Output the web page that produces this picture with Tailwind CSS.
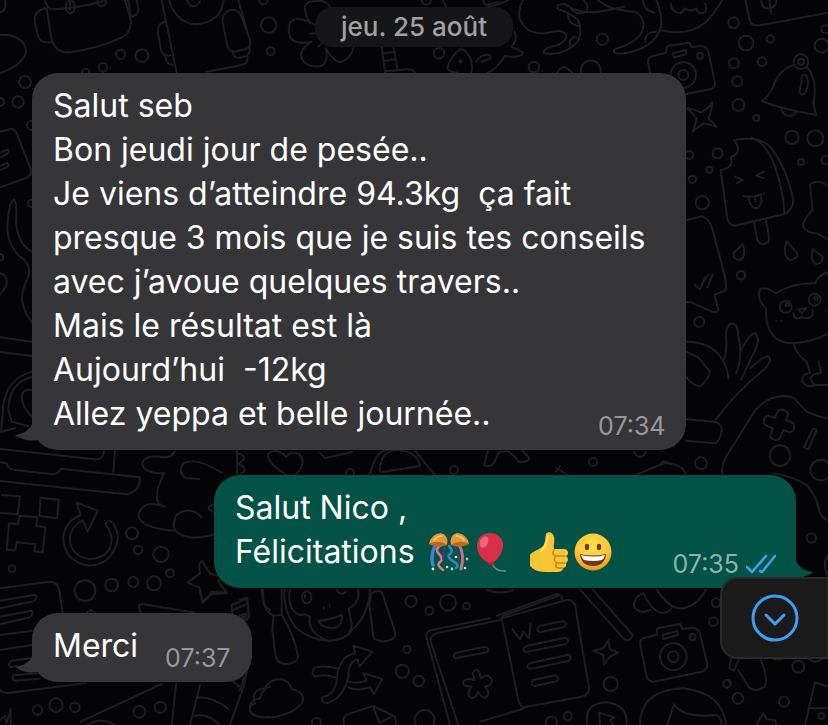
<!DOCTYPE html>
<html lang="fr">
<head>
  <meta charset="UTF-8" />
  <meta name="viewport" content="width=device-width, initial-scale=1" />
  <title>Conversation</title>
  <script src="https://cdn.jsdelivr.net/npm/@tailwindcss/browser@4"></script>
</head>
<body class="bg-[#040406] text-white font-['Inter',sans-serif] overflow-x-hidden">
  <div class="relative min-h-screen overflow-hidden">
    <!-- Wallpaper -->
    <svg aria-hidden="true" class="absolute top-0 left-0 w-[828px] h-[725px] text-[#1e1e20]" viewBox="0 0 828 725" fill="none" stroke="currentColor" stroke-width="6" stroke-linecap="round" stroke-linejoin="round">
      <!-- top left -->
      <g transform="scale(.33333)">
        <path d="M0 104Q70 102 78 150Q78 190 0 220M15 0Q22 30 0 38M135 0Q140 25 155 28Q240 25 320 0M140 25L155 120Q168 160 210 157Q300 145 370 110Q395 95 392 60L375 0M135 25Q100 35 104 62L114 110Q122 130 152 127M385 0L392 50Q420 45 414 20L410 0M210 5V30" />
        <ellipse cx="211" cy="20" rx="13" ry="20" /><circle cx="305" cy="5" r="13" />
        <circle cx="362" cy="163" r="14" /><circle cx="426" cy="167" r="19" /><circle cx="309" cy="202" r="13" /><circle cx="257" cy="217" r="11" /><circle cx="75" cy="246" r="18" /><circle cx="54" cy="306" r="17" /><circle cx="0" cy="306" r="12" />
        <path d="M485 0L530 218M507 0Q530 72 590 73Q665 65 671 0M560 0Q578 35 600 5M715 0L745 105M620 215L725 195Q745 190 742 170M495 65Q470 70 474 100L483 150Q490 170 512 166M495 168Q498 192 518 195M690 30Q666 40 668 65L682 140Q688 158 710 154L740 146Q755 140 750 120L724 50Q715 25 690 30M698 156Q700 175 718 173L738 168Q752 160 748 144" />
        <circle cx="806" cy="75" r="23" /><circle cx="812" cy="154" r="12" /><circle cx="790" cy="0" r="13" />
        <path d="M930 70Q900 15 930 5Q985 -5 990 25M945 75Q895 45 872 65Q860 85 872 115Q890 135 935 125Q895 150 905 175Q920 205 965 198Q985 190 978 145Q1000 185 1020 187Q1050 180 1062 140M930 100H945M955 140L965 130M1145 140L1155 218M1180 140L1192 205M1148 160L1185 156M1150 183L1188 178M1155 214L1225 208Q1240 208 1245 218" />
      </g>
      <!-- top right -->
      <g transform="translate(408 0) scale(.33333)">
        <path d="M104 0L114 20M225 0Q230 22 255 18Q285 10 300 0M235 15L275 5M345 0Q320 50 350 80Q370 105 420 98Q465 85 475 105Q478 120 450 135Q400 145 408 160Q470 168 510 125Q525 90 510 60Q480 35 450 28Q440 12 470 12Q520 50 600 30L650 20M570 0Q600 30 680 35Q720 55 700 100Q680 130 620 148Q610 165 650 160Q740 145 760 80Q760 30 745 0M755 90Q840 110 890 70Q920 40 942 0M480 45Q482 75 515 78M485 20Q500 50 535 35Q545 15 525 0M505 110Q480 115 488 138M705 0Q705 30 740 38M745 95Q710 95 712 125M788 10Q790 40 820 38L830 25Q850 38 865 25Q870 45 890 38Q900 20 890 10" />
        <path d="M320 95Q330 120 310 140L345 158Q340 175 290 168Q265 210 240 218M160 145Q125 170 118 205Q125 218 150 218M160 145Q200 170 190 218M205 185Q220 160 245 165Q260 175 220 185" />
        <circle cx="55" cy="0" r="14" /><circle cx="93" cy="160" r="16" /><circle cx="157" cy="184" r="3" /><circle cx="378" cy="201" r="16" /><circle cx="583" cy="118" r="17" /><path d="M448 218Q465 185 492 218M518 218Q518 185 548 181Q580 185 578 218" />
        <path d="M1012 0L1025 60Q1030 80 1055 76L1260 38M1060 0Q1060 25 1080 25Q1105 25 1105 0M1085 0V10L1090 42" />
        <circle cx="977" cy="68" r="16" /><circle cx="1014" cy="129" r="22" /><circle cx="1087" cy="117" r="11" /><circle cx="1241" cy="137" r="21" /><circle cx="1252" cy="88" r="12" />
      </g>
      <!-- camera, bell, ice cream -->
      <g transform="translate(660 40) scale(.33333)">
        <path d="M-28 110L-36 65Q-36 50 -20 48L18 38L22 18L88 8L95 22L120 18Q140 18 145 35L165 130Q165 145 150 148L78 162M38 40L78 30L80 42L42 52Z" />
        <circle cx="70" cy="105" r="38" /><circle cx="70" cy="105" r="15" /><circle cx="120" cy="47" r="9" />
        <circle cx="222" cy="70" r="15" /><circle cx="306" cy="65" r="13" /><circle cx="232" cy="124" r="15" /><circle cx="235" cy="195" r="18" /><circle cx="289" cy="234" r="9" /><circle cx="396" cy="292" r="20" /><circle cx="466" cy="295" r="24" /><circle cx="423" cy="366" r="9" /><circle cx="173" cy="340" r="15" /><circle cx="148" cy="389" r="9" /><circle cx="97" cy="418" r="11" /><circle cx="88" cy="345" r="12" /><circle cx="127" cy="488" r="20" /><circle cx="243" cy="706" r="12" /><circle cx="497" cy="360" r="13" />
        <path d="M403 73Q355 90 340 138Q330 165 306 182Q350 205 468 225L460 190Q475 120 440 80M363 205Q370 230 390 228Q405 225 408 215M425 110Q430 100 440 108Q450 135 435 160Q425 168 418 155Q425 130 425 110" />
        <circle cx="423" cy="65" r="22" /><circle cx="423" cy="65" r="9" />
        <path d="M82 205Q110 210 122 218Q145 205 157 187Q152 220 145 235L170 260Q145 252 130 250Q110 262 98 275Q108 250 110 235Q98 220 82 205" />
        <path d="M222 300Q300 285 335 325Q380 385 400 480Q400 505 375 522L225 557Q205 555 202 535L182 390Q210 388 215 365L212 350Q240 345 232 315ZM275 293Q320 310 345 380Q375 470 372 522M282 550L292 600Q305 622 325 605Q330 595 318 543M225 410L249 420L230 430M312 395L288 407L312 415M250 468Q280 475 312 460M265 472Q270 505 290 505Q310 495 302 468M284 472L287 485" />
        <path d="M248 612L220 640Q220 660 240 660Q260 650 248 612M380 603Q365 650 390 660Q415 655 412 640ZM458 627Q450 665 470 672Q490 668 488 650ZM80 540L125 529Q145 535 155 560L198 720M135 718L145 705M150 718L158 705M504 437Q465 415 450 435L458 510Q425 545 430 560Q440 580 470 580L504 598M475 715Q485 702 504 700" />
      </g>
      <!-- cat, hand, game pad -->
      <g transform="translate(660 270) scale(.33333)">
        <path d="M188 0Q200 30 198 60L163 75L175 120Q170 130 155 125L95 97H78M105 45L120 58L137 20M143 52L158 14" />
        <circle cx="243" cy="16" r="13" /><circle cx="118" cy="156" r="15" /><circle cx="123" cy="580" r="18" />
        <path d="M504 5Q475 15 465 40Q400 38 347 70Q325 50 300 57Q290 90 318 115Q315 220 400 220Q465 215 504 190M402 222Q405 250 440 275L450 310Q425 310 427 335Q440 355 465 345Q440 325 465 312L484 308L475 275M460 345H504M400 130Q405 155 425 140Q435 150 455 140Q460 130 458 120M415 118L438 115L425 130Z" />
        <circle cx="377" cy="110" r="18" /><circle cx="464" cy="89" r="18" /><circle cx="382" cy="104" r="5" /><circle cx="468" cy="84" r="5" /><path d="M348 152h1M363 153h1M497 122h1" />
        <path d="M78 215Q160 215 190 275Q205 300 205 325M190 272Q202 250 198 200Q198 165 215 160Q235 162 235 200Q250 260 228 310M243 240Q270 190 285 190Q300 200 290 230L243 330M272 295Q310 258 325 258Q340 270 310 300Q220 375 168 448M78 245L115 262L150 305Q145 330 120 350Q95 345 78 320M78 448L165 455Q185 460 185 480Q180 515 165 520L78 512" />
        <path d="M188 612Q180 590 205 550L280 430Q325 365 400 382L440 425Q470 440 504 445M340 610Q400 620 440 645Q470 680 478 720" />
        <path d="M355 420Q375 415 385 432L378 450L400 460Q410 480 390 487L370 480L360 505Q345 518 330 500L338 475L315 465Q305 445 322 437L345 443ZM460 475L470 480L445 538L432 532Z" />
        <circle cx="360" cy="557" r="31" /><circle cx="482" cy="600" r="31" />
      </g>
      <!-- left edge -->
      <g transform="translate(0 60) scale(.33333)">
        <path d="M0 215L35 206Q45 208 50 220L95 335Q90 350 75 355L0 382M0 278L24 268Q30 275 20 283L0 292M0 318L22 308Q30 315 20 323L0 330M96 575Q50 550 48 480Q52 425 42 418Q25 430 22 500Q20 550 60 590Q95 610 85 650Q60 700 68 730Q75 760 96 788M0 640Q22 645 20 670Q15 690 0 702M0 832L96 845M0 876L96 888M96 935Q10 960 8 1060L3 1115L45 1105M96 950Q25 970 25 1050L35 1085L85 1098M96 990Q65 985 65 1015Q70 1045 96 1070" />
        <circle cx="95" cy="196" r="14" /><circle cx="95" cy="430" r="11" /><circle cx="0" cy="592" r="10" />
      </g>
      <!-- laptop, arrow, cloud -->
      <g transform="translate(0 400) scale(.33333)">
        <path d="M0 147L285 178Q310 180 312 153M345 153L340 215M0 187L20 190Q25 208 45 210L160 223Q175 220 182 206L420 232Q420 275 380 283L0 243" />
        <path d="M6 285L60 289L53 343L0 338M122 293L177 299L171 355L118 348ZM58 347L112 352L108 378L136 382L128 458L103 454L106 432L50 427L46 451L20 449L27 370L54 373Z" />
        <path d="M230 308L293 332L263 395L248 360Q205 385 210 425Q220 475 275 477Q335 470 335 415Q332 395 316 372Q325 355 340 370Q360 405 350 430Q330 500 260 496Q190 480 190 410Q195 365 242 345Z" />
        <path d="M525 155Q510 178 480 170Q430 165 427 190Q430 220 492 220Q460 285 475 310L493 320Q430 295 415 345Q420 385 520 392M605 352Q570 315 530 345Q500 400 570 412Q610 415 645 402M665 218Q590 170 550 190Q530 220 560 235L597 236M645 315Q625 312 626 328L640 336" />
        <circle cx="396" cy="400" r="18" /><circle cx="414" cy="450" r="13" /><circle cx="483" cy="463" r="23" /><circle cx="510" cy="520" r="12" /><circle cx="462" cy="550" r="21" /><circle cx="400" cy="546" r="15" /><circle cx="335" cy="555" r="19" /><circle cx="255" cy="572" r="31" /><circle cx="36" cy="506" r="10" /><circle cx="272" cy="643" r="12" />
        <path d="M605 482Q595 485 600 520L562 548L598 562L605 600Q612 608 635 575L680 578L655 545L665 530L630 520ZM0 565L150 545Q175 548 178 570L188 640M0 602L105 584Q115 592 100 604L0 625M0 650L95 632Q102 640 90 652L0 673M0 705L96 692M425 640Q408 615 425 612L585 638" />
      </g>
      <!-- bottom left -->
      <g transform="translate(0 590) scale(.33333)">
        <path d="M0 180L95 165M90 205L35 212Q20 222 32 232L48 228M110 250L42 256Q32 265 45 272L118 266M0 300Q5 312 30 308L255 280M0 390L15 378L20 400L32 358V405M242 395L485 282M528 282L515 405M600 285L570 405M750 200L732 285L690 405M700 275L718 290M592 322Q640 320 685 357M575 380Q620 365 660 405M810 290Q790 290 780 325Q745 330 750 360Q755 385 810 380M695 45L742 25L747 78Q735 95 725 75L738 70M695 45L698 80Q712 92 720 75M698 60L742 42M600 0L608 38L635 12L680 10M790 0Q785 50 810 60M262 405Q300 380 345 405" />
        <circle cx="113" cy="360" r="14" /><circle cx="168" cy="345" r="20" /><circle cx="225" cy="352" r="14" /><circle cx="418" cy="365" r="18" /><circle cx="481" cy="352" r="17" />
      </g>
      <!-- monkey, shuffle, notebook -->
      <g transform="translate(240 580) scale(.33333)">
        <path d="M65 28Q65 90 100 107L125 105V28M100 107L97 150L107 230Q115 255 145 252Q175 245 174 230Q165 170 125 105M133 28Q130 100 170 145Q210 180 265 182Q320 180 335 150Q385 110 390 28M150 28Q140 90 180 105Q200 100 210 110Q200 160 265 182Q335 180 335 130L325 85Q360 70 355 28M235 122Q270 120 305 105Q310 130 290 142Q250 150 235 122M395 40L388 75L400 170Q410 188 445 182Q470 175 465 155L425 35Q405 30 395 40" />
        <ellipse cx="200" cy="52" rx="14" ry="18" /><path d="M290 28Q300 50 318 35M251 82v4M269 75v4M195 45v8" />
        <path d="M340 197L397 215L358 260L353 238Q325 245 325 290Q310 355 260 370Q240 365 248 350Q285 345 290 300Q295 230 345 220ZM290 265Q250 255 225 263Q210 280 225 290Q250 280 285 292M325 305Q345 312 380 302L370 280L427 297L402 342L390 322Q350 335 325 322" />
        <path d="M45 370Q30 330 75 325Q90 295 125 298Q150 305 155 328Q195 335 188 365Q170 395 110 410Q50 420 32 395Q25 375 45 370M312 435L310 415Q315 405 330 400L400 378L465 410L468 435M400 378Q405 400 420 428L458 408M0 60L20 52L28 110Q15 130 5 112L20 105M0 80L22 72M12 290L0 330" />
        <circle cx="513" cy="64" r="17" /><circle cx="568" cy="92" r="12" /><circle cx="624" cy="68" r="24" /><circle cx="680" cy="78" r="10" /><circle cx="501" cy="208" r="11" /><circle cx="487" cy="274" r="20" /><circle cx="536" cy="303" r="16" /><circle cx="554" cy="420" r="30" /><circle cx="229" cy="428" r="14" />
        <path d="M630 435L560 175Q555 155 575 150L750 115M655 435L572 185Q570 165 590 160L780 120L790 108L960 45M735 200L650 218Q635 225 645 235L740 217Q752 205 735 200M698 280Q705 262 718 275L722 295Q745 278 755 298Q760 315 735 320Q755 340 738 352Q725 355 715 335Q705 362 688 350Q680 335 695 320Q665 320 670 305Q680 292 705 300Z" />
      </g>
      <!-- document, camera, avatar -->
      <g transform="translate(480 580) scale(.33333)">
        <path d="M50 108L230 42Q250 45 245 58M65 115L260 60Q280 58 285 75L327 325Q325 345 305 350L130 382Q115 370 115 360ZM0 425L125 388L145 378M20 30Q60 45 100 30M97 148L120 178L130 155L147 175L152 130M178 138L250 123Q265 130 250 142L180 157Q165 152 178 138M138 198L255 173Q272 180 258 192L140 216Q122 212 138 198M148 250L265 224Q280 232 265 243L152 267Q135 262 148 250M160 300L225 286Q242 292 230 304L165 318Q148 315 160 300" />
        <path d="M300 28L430 175Q450 190 458 165L338 28M490 40Q460 50 462 80Q480 105 510 90M490 40Q520 100 550 98Q575 95 575 80M530 28Q570 90 610 85Q655 75 678 28M385 180L390 208L415 218L390 230L372 253L370 225L340 212L370 205Z" />
        <path d="M480 190Q480 178 495 173L530 165L532 145L600 132L607 147L640 143Q655 145 660 160L682 255Q680 270 665 275L520 305Q505 305 500 290ZM548 165L592 153L594 165L550 177Z" />
        <circle cx="580" cy="230" r="40" /><circle cx="580" cy="230" r="16" /><circle cx="638" cy="171" r="9" /><circle cx="392" cy="312" r="21" /><circle cx="214" cy="427" r="17" /><circle cx="263" cy="409" r="12" /><circle cx="708" cy="68" r="13" /><circle cx="700" cy="125" r="13" /><circle cx="740" cy="312" r="11" />
        <path d="M322 435Q310 370 380 367Q445 375 440 435M360 435L357 398L403 412L390 420L400 435M480 435Q480 330 610 325Q730 340 738 435M562 435L582 373Q610 415 710 405Q725 415 725 435" />
      </g>
      <!-- bottom right -->
      <g transform="translate(660 500) scale(.33333)">
        <path d="M470 0Q475 50 504 62M504 165Q485 190 504 230M213 475L208 505L222 512L238 475M235 510L265 560Q285 580 315 560Q325 530 300 475M335 475Q355 482 370 475M435 675L465 547L504 560M445 625H504M290 675L300 655L310 640L320 658L345 660L350 675" />
        <circle cx="454" cy="114" r="14" /><circle cx="415" cy="500" r="18" /><circle cx="202" cy="551" r="11" /><circle cx="234" cy="595" r="16" /><circle cx="372" cy="605" r="15" /><circle cx="484" cy="648" r="9" /><path d="M445 475Q465 495 490 475" />
      </g>
      <!-- strip between the first two bubbles -->
      <g stroke-width="2">
        <path d="M237 450V474M237 453Q250 457 238 464Q250 468 240 475M292 478C262 462 265 450 276 451Q283 452 286 457Q292 450 299 454Q309 464 292 478" />
        <path d="M320 453L325 458L352 452M369 475L375 460Q380 450 388 450M380 471Q380 450 398 450Q418 452 420 466L382 472M415 450Q422 460 435 475" />
        <path d="M488 450L484 465Q490 468 494 463L499 452L508 451L514 456L519 462Q530 462 529 458L522 450M556 468L570 476M560 466L556 472M636 475L664 463Q682 464 686 474M634 452Q640 462 646 452M661 465Q662 459 669 463" />
        <circle cx="350" cy="473" r="4" /><circle cx="454" cy="470" r="4" /><circle cx="593" cy="462" r="4" />
      </g>
    </svg>

    <main class="relative flex flex-col pt-[7px] px-8 pb-10">
      <time datetime="08-25" class="self-center rounded-[18px] bg-[#161618] px-[26px] h-10 leading-10 text-[26px] font-medium text-[#a1a1a4]">jeu. 25 août</time>

      <!-- Received -->
      <article class="relative mt-[26px] w-fit rounded-[26px] bg-[#363638] pt-[11px] pb-[14px] pl-[21px] pr-10">
        <svg aria-hidden="true" class="absolute -left-[17px] bottom-0 w-12 h-9 text-[#363638]" viewBox="0 0 48 36" fill="currentColor"><path d="M17 0V10C15 16 8 20 0 21C8 27 17 27 24 26L48 36V0Z" /></svg>
        <p class="relative text-[32px] leading-[44px] whitespace-pre-wrap">Salut seb
Bon jeudi jour de pesée..
Je viens d’atteindre 94.3kg  ça fait
presque 3 mois que je suis tes conseils
avec j’avoue quelques travers..
Mais le résultat est là
Aujourd’hui  -12kg</p>
        <div class="relative flex items-end justify-between -mr-5">
          <p class="text-[32px] leading-[44px]">Allez yeppa et belle journée..</p>
          <time class="-mb-[6px] text-[25px] leading-8 text-[#98989c]">07:34</time>
        </div>
      </article>

      <!-- Sent -->
      <article class="relative mt-[25px] w-fit self-end flex items-end gap-[60px] rounded-[26px] bg-[#035246] pt-[11px] pb-[14px] pl-[21px] pr-5">
        <svg aria-hidden="true" class="absolute -right-[17px] bottom-0 w-12 h-9 text-[#035246]" viewBox="0 0 48 36" fill="currentColor"><path d="M31 0V8C33 15 40 19 48 20C40 26 31 27 24 26L0 36V0Z" /></svg>
        <div class="relative text-[32px] leading-[44px]">
          <p>Salut Nico ,</p>
          <p class="flex items-center">
            <span class="mr-[14px]">Félicitations</span>
            <!-- confetti ball -->
            <svg role="img" aria-label="boule de confettis" class="w-10 h-10 mr-1" viewBox="0 0 40 40" fill="none" stroke-linecap="round">
              <path d="M6 14Q1 24 4 33" stroke="#3f83d6" stroke-width="3.5" />
              <path d="M12 13Q5 17 10 22T11 30T14 38" stroke="#d6788e" stroke-width="2.6" />
              <path d="M20 14Q25 19 21 22T24 29T27 36" stroke="#2f86bd" stroke-width="2.6" />
              <path d="M30 13Q36 22 32 37" stroke="#c4718a" stroke-width="3" />
              <path d="M16 14L14 27M26 15L30 27" stroke="#443c78" stroke-width="2" />
              <path d="M0 12Q2 2 12 1Q20 3 18 13Q9 10 0 12Z" fill="#e79835" /><path d="M0 12Q10 7 18 13Q9 17 0 12Z" fill="#b86b20" />
              <path d="M40 12Q38 2 28 1Q20 3 22 13Q31 10 40 12Z" fill="#e79835" /><path d="M40 12Q30 7 22 13Q31 17 40 12Z" fill="#b86b20" />
              <path d="M5 8Q8 4 13 4M27 4Q32 4 35 8" stroke="#ffd071" stroke-width="1.5" />
              <g stroke="none"><circle cx="4" cy="37" r="1.4" fill="#d9eca2" /><circle cx="18" cy="35" r="1.3" fill="#e6d4c9" /><circle cx="23" cy="37" r="1.4" fill="#8cdde0" /><circle cx="38" cy="27" r="1.4" fill="#e6a6b5" /><circle cx="27" cy="25" r="1.3" fill="#f6e7ac" /><circle cx="36" cy="36" r="1.3" fill="#c6e5bd" /></g>
            </svg>
            <!-- balloon -->
            <svg role="img" aria-label="ballon" class="w-10 h-10 mr-4" viewBox="0 0 40 40" fill="none">
              <path d="M19 31Q22 40 33 39" stroke="#6b8d87" stroke-width="1.5" />
              <path d="M4 14C4 5 10 1 17 1C25 1 31 7 30 15C29 23 23 29 19 31L16 31C9 28 4 22 4 14Z" fill="#d92f49" />
              <path d="M17 30L15 33L22 33L20 29Z" fill="#b91e35" />
              <ellipse cx="11" cy="10" rx="4" ry="6" fill="#f0647a" transform="rotate(25 11 10)" />
            </svg>
            <!-- thumbs up -->
            <svg role="img" aria-label="pouce levé" class="w-10 h-10 mr-1" viewBox="0 0 40 40" fill="none">
              <path d="M1 23C3 19 11 18 14 14C17 10 16 5 17 2C19 -1 24 0 25 5C26 10 24 14 25 17H35C40 17 40 23 37 24C40 26 39 30 37 31C38 34 36 36 34 36C34 39 31 40 28 40H17C8 40 4 37 1 34Z" fill="#fbc536" />
              <path d="M25 18Q22 22 27 24H36M27 24Q23 28 28 31H36M28 31Q25 35 29 36H34" stroke="#cf8217" stroke-width="1.5" stroke-linecap="round" />
              <path d="M19 4Q18 14 12 19" stroke="#ffe076" stroke-width="2" stroke-linecap="round" />
            </svg>
            <!-- grinning face -->
            <svg role="img" aria-label="sourire" class="w-10 h-10" viewBox="0 0 40 40">
              <defs><radialGradient id="face" cx=".5" cy=".35" r=".65"><stop offset="0" stop-color="#ffe24d" /><stop offset=".7" stop-color="#fbc434" /><stop offset="1" stop-color="#ea9520" /></radialGradient></defs>
              <circle cx="20" cy="20" r="18.5" fill="url(#face)" />
              <ellipse cx="14" cy="15" rx="2.2" ry="3.2" fill="#6b3d0c" /><ellipse cx="26" cy="15" rx="2.2" ry="3.2" fill="#6b3d0c" />
              <path d="M7 22Q20 25 33 22Q32 34 20 34Q8 34 7 22Z" fill="#743716" />
              <path d="M8 23Q20 26 32 23Q31 27 29 28Q20 30 11 28Q9 27 8 23Z" fill="#fff" />
            </svg>
          </p>
        </div>
        <div class="relative flex items-center gap-[7px] -mb-[6px] leading-8">
          <time class="text-[25px] text-[#8cb3ac]">07:35</time>
          <svg role="img" aria-label="Lu" class="w-[30px] h-5" viewBox="0 0 30 20" fill="none" stroke="#3f9fee" stroke-width="2.6" stroke-linecap="round" stroke-linejoin="round"><path d="M1 13L6 18L20 2M14 17L16 18L29 2" /></svg>
        </div>
      </article>

      <!-- Received -->
      <article class="relative mt-[25px] w-fit flex items-end gap-[27px] rounded-[26px] bg-[#363638] pt-[11px] pb-[14px] px-[21px]">
        <svg aria-hidden="true" class="absolute -left-[17px] bottom-0 w-12 h-9 text-[#363638]" viewBox="0 0 48 36" fill="currentColor"><path d="M17 0V10C15 16 8 20 0 21C8 27 17 27 24 26L48 36V0Z" /></svg>
        <p class="relative text-[32px] leading-[44px]">Merci</p>
        <time class="relative -mb-[6px] text-[25px] leading-8 text-[#98989c]">07:37</time>
      </article>
    </main>

    <!-- Scroll to bottom -->
    <button type="button" aria-label="Aller en bas" class="absolute right-0 top-[577px] w-[108px] h-[82px] flex items-center justify-center rounded-l-[18px] border-2 border-[#2a2a2c] border-r-[1px] bg-[#1a1a1b]">
      <svg class="w-12 h-12" viewBox="0 0 48 48" fill="none" stroke="#3f9ff5" stroke-width="3" stroke-linecap="round" stroke-linejoin="round">
        <circle cx="24" cy="24" r="22" />
        <path d="M15 21L24 30L33 21" />
      </svg>
    </button>
  </div>
</body>
</html>
